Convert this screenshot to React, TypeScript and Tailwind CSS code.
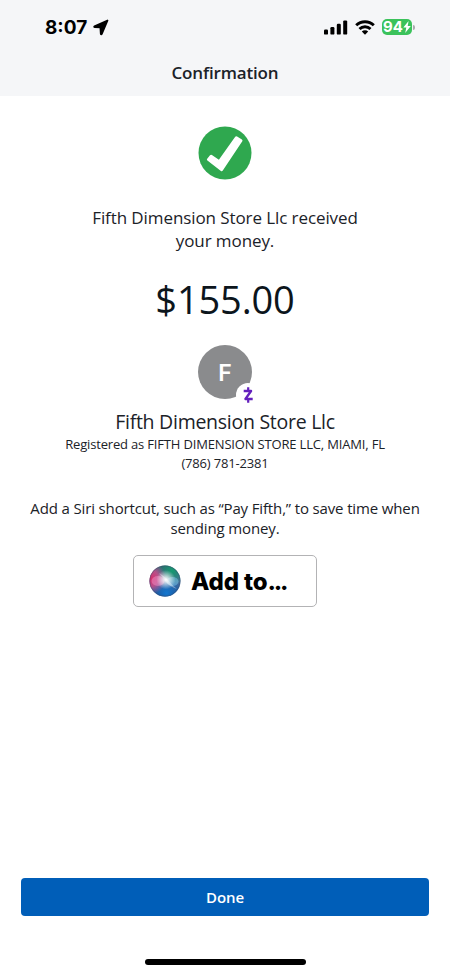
import React from 'react';

const payment = {
  recipient: 'Fifth Dimension Store Llc',
  amount: '$155.00',
  registeredAs: 'FIFTH DIMENSION STORE LLC, MIAMI, FL',
  phone: '(786) 781-2381',
};

function LocationArrow() {
  return (
    <svg width="16" height="17" viewBox="0 0 16 17" className="ml-[6px]">
      <path
        d="M14.5 1.5 1.5 7.2c-.5.3-.4.9.2.9l5.7.3.4 6.4c0 .6.7.7 1 .1z"
        fill="#000"
        stroke="#000"
        strokeWidth="1.8"
        strokeLinejoin="round"
      />
    </svg>
  );
}

function SignalBars() {
  return (
    <svg width="24" height="15" viewBox="0 0 24 15">
      <rect x="0" y="9.4" width="4" height="5.2" rx="1.2" />
      <rect x="6.4" y="7" width="4" height="7.6" rx="1.2" />
      <rect x="12.8" y="3.8" width="4" height="10.8" rx="1.2" />
      <rect x="19.2" y="0.4" width="4" height="14.2" rx="1.2" />
    </svg>
  );
}

function WifiIcon() {
  return (
    <svg width="20" height="15" viewBox="0 0 20 15" fill="none" stroke="#000" strokeWidth="2.9">
      <path d="M1.2 5.3a12.6 12.6 0 0 1 17.6 0" />
      <path d="M4.5 9a7.8 7.8 0 0 1 11 0" />
      <path d="M10 14.8 6.8 11.6a4.6 4.6 0 0 1 6.4 0z" fill="#000" stroke="none" />
    </svg>
  );
}

function Battery() {
  return (
    <div className="flex items-center">
      <div className="flex h-4 w-[30px] items-center justify-center rounded-[5px] bg-[#3bc25b]">
        <span className="font-['Inter'] text-[15px] leading-4 font-bold text-white">94</span>
        <svg width="8" height="12" viewBox="0 0 8 12">
          <path d="M5.6 0 .3 6.6h3L2.2 12 7.800 5H4.7z" fill="#fff" />
        </svg>
      </div>
      <div className="ml-px h-[5px] w-[1.5px] rounded-r-full bg-[#a9abad]" />
    </div>
  );
}

function StatusBar() {
  return (
    <div className="flex h-[54px] items-center justify-between pr-[35.5px] pl-[45px]">
      <div className="flex items-center pt-px">
        <span className="font-['Inter'] text-[19px] leading-6 font-bold text-black">8:07</span>
        <LocationArrow />
      </div>
      <div className="flex items-center gap-[7px]">
        <SignalBars />
        <WifiIcon />
        <Battery />
      </div>
    </div>
  );
}

function SuccessBadge() {
  return (
    <svg width="54" height="54" viewBox="0 0 54 54">
      <circle cx="27" cy="27" r="26.5" fill="#2fa84f" />
      <path
        d="M9.2 32.8 12 29.3q.8-.9 1.9-.3l7 4.7L37.2 10.8q.8-1.1 1.9-.4l4.8 3q1.1.8.4 1.9L24.8 44.500q-.8 1.1-1.9.4L9.4 34.6q-1-.8-.2-1.8z"
        fill="#fff"
      />
    </svg>
  );
}

function Avatar() {
  return (
    <div className="relative size-[54px]">
      <div className="flex size-[54px] items-center justify-center rounded-full bg-[#8a8b8d]">
        <span className="pt-0.5 font-['Inter'] text-[23px] leading-none font-semibold text-white">F</span>
      </div>
      <svg width="24" height="24" viewBox="0 0 24 24" className="absolute top-[38px] left-[38px]">
        <circle cx="12" cy="12" r="12" fill="#fff" />
        <g fill="none" stroke="#6420bd">
          <path d="M7.7 8h7.400L9.4 16h7.300" strokeWidth="2.3" strokeLinejoin="round" />
          <path d="M12.200 4.300V8M12.200 16v3.700" strokeWidth="2.2" />
        </g>
      </svg>
    </div>
  );
}

function SiriOrb() {
  return (
    <svg width="32" height="32" viewBox="0 0 32 32">
      <defs>
        <linearGradient id="orbBase" x1="0" y1="0" x2="0" y2="1">
          <stop offset="0" stopColor="#2f5f68" />
          <stop offset="0.5" stopColor="#4c739f" />
          <stop offset="1" stopColor="#163d82" />
        </linearGradient>
        <radialGradient id="orbPink" cx="0.04" cy="0.42" r="0.5">
          <stop offset="0" stopColor="#d92a68" />
          <stop offset="0.5" stopColor="#cf4a88" stopOpacity="0.85" />
          <stop offset="1" stopColor="#c65a9c" stopOpacity="0" />
        </radialGradient>
        <radialGradient id="orbGreen" cx="0.72" cy="0.18" r="0.45">
          <stop offset="0" stopColor="#159a70" />
          <stop offset="1" stopColor="#159a70" stopOpacity="0" />
        </radialGradient>
        <radialGradient id="orbBlue" cx="0.55" cy="0.88" r="0.5">
          <stop offset="0" stopColor="#1377cf" />
          <stop offset="1" stopColor="#1377cf" stopOpacity="0" />
        </radialGradient>
        <radialGradient id="orbGlow" cx="0.53" cy="0.46" r="0.3">
          <stop offset="0" stopColor="#fff" />
          <stop offset="0.3" stopColor="#fff" stopOpacity="0.7" />
          <stop offset="1" stopColor="#fff" stopOpacity="0" />
        </radialGradient>
        <clipPath id="orbClip">
          <circle cx="16" cy="16" r="15.5" />
        </clipPath>
      </defs>
      <g clipPath="url(#orbClip)">
        <rect width="32" height="32" fill="url(#orbBase)" />
        <rect width="32" height="32" fill="url(#orbGreen)" />
        <rect width="32" height="32" fill="url(#orbBlue)" />
        <rect width="32" height="32" fill="url(#orbPink)" />
        <ellipse cx="9" cy="16" rx="6.5" ry="5" fill="#f08fc6" opacity="0.5" />
        <ellipse cx="23.5" cy="16.5" rx="6" ry="4.5" fill="#7cc6ea" opacity="0.5" />
        <path d="M10 8Q15 11 18 14Q23 20 28 24Q20 21 16 16Q13 11 10 8z" fill="#fff" opacity="0.35" />
        <rect width="32" height="32" fill="url(#orbGlow)" />
      </g>
      <circle cx="16" cy="16" r="15.2" fill="none" stroke="#3a506e" strokeWidth="0.7" opacity="0.6" />
    </svg>
  );
}

export default function App() {
  return (
    <div className="flex h-[973px] w-[450px] flex-col bg-white font-['Open_Sans',sans-serif] text-[#1b2228]">
      <header className="h-24 shrink-0 bg-[#f5f6f8]">
        <StatusBar />
        <h1 className="text-center text-[17px] leading-[38px] font-semibold tracking-[-0.16px]">Confirmation</h1>
      </header>

      <main className="flex flex-1 flex-col items-center pt-[30px] text-center">
        <SuccessBadge />
        <p className="mt-[26px] text-[17px] leading-[23px] tracking-[-0.09px]">
          {payment.recipient} received
          <br />
          your money.
        </p>
        <div className="mt-[22px] text-[38px] leading-[50px] tracking-[-0.15px] text-[#0c151c]">{payment.amount}</div>

        <div className="mt-[21px]">
          <Avatar />
        </div>
        <h2 className="mt-[10px] text-[19.5px] leading-[26px] tracking-[-0.27px]">{payment.recipient}</h2>
        <p className="text-[13px] leading-[18.5px] tracking-[-0.17px]">
          Registered as {payment.registeredAs}
          <br />
          {payment.phone}
        </p>

        <p className="mt-[26px] text-[15px] leading-5 tracking-[-0.14px]">
          Add a Siri shortcut, such as “Pay Fifth,” to save time when
          <br />
          sending money.
        </p>
        <button className="mt-[17px] flex h-[52px] w-[184px] items-center rounded-[5px] border border-[#b3b3b5] pl-[15px]">
          <SiriOrb />
          <span className="ml-[10px] pt-0.5 font-['Inter'] text-[24px] leading-8 font-extrabold tracking-[-0.15px] text-black">
            Add to<span className="tracking-[-2.2px]">...</span>
          </span>
        </button>
      </main>

      <footer className="flex flex-col items-center px-[21px] pb-2">
        <button className="h-[38px] w-full rounded bg-[#005eb8] text-[15px] font-semibold tracking-[-0.1px] text-white">
          Done
        </button>
        <div className="mt-[43px] h-1.5 w-[161px] rounded-full bg-black" />
      </footer>
    </div>
  );
}
